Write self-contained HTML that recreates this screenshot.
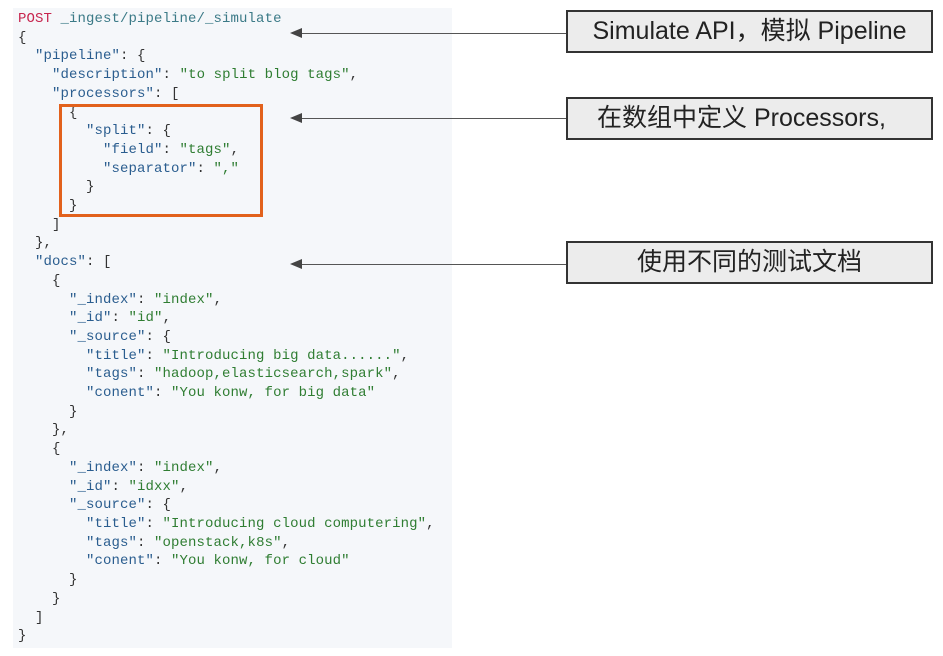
<!DOCTYPE html>
<html><head><meta charset="utf-8"><style>
body{margin:0;width:943px;height:656px;background:#fff;position:relative;overflow:hidden}
#p{position:absolute;left:13px;top:8px;width:439px;height:640px;background:#f5f7fa}
pre{position:absolute;left:18px;top:10px;margin:0;font-family:"Liberation Mono",monospace;font-size:14px;line-height:18.7px;color:#333;letter-spacing:0.1px}
.k{color:#2a5d8f}.s{color:#2f7d32}.r{color:#c7254e}.u{color:#3b7a87}
.b{position:absolute;left:566px;width:367px;height:43px;background:#ececec;border:2px solid #333;box-sizing:border-box;font-family:"Liberation Sans","Noto Sans CJK SC",sans-serif;font-size:25px;color:#222;text-align:center;line-height:39px}
.l{position:absolute;left:298px;width:268px;height:1px;background:#555}
.a{position:absolute;left:290px;width:0;height:0;border-top:5px solid transparent;border-bottom:5px solid transparent;border-right:12px solid #444}
#o{position:absolute;left:59px;top:104px;width:204px;height:113px;border:3px solid #e2611c;box-sizing:border-box}
</style></head><body>
<div id="p"></div>
<pre><span class="r">POST</span> <span class="u">_ingest/pipeline/_simulate</span>
{
  <span class="k">"pipeline"</span>: {
    <span class="k">"description"</span>: <span class="s">"to split blog tags"</span>,
    <span class="k">"processors"</span>: [
      {
        <span class="k">"split"</span>: {
          <span class="k">"field"</span>: <span class="s">"tags"</span>,
          <span class="k">"separator"</span>: <span class="s">","</span>
        }
      }
    ]
  },
  <span class="k">"docs"</span>: [
    {
      <span class="k">"_index"</span>: <span class="s">"index"</span>,
      <span class="k">"_id"</span>: <span class="s">"id"</span>,
      <span class="k">"_source"</span>: {
        <span class="k">"title"</span>: <span class="s">"Introducing big data......"</span>,
        <span class="k">"tags"</span>: <span class="s">"hadoop,elasticsearch,spark"</span>,
        <span class="k">"conent"</span>: <span class="s">"You konw, for big data"</span>
      }
    },
    {
      <span class="k">"_index"</span>: <span class="s">"index"</span>,
      <span class="k">"_id"</span>: <span class="s">"idxx"</span>,
      <span class="k">"_source"</span>: {
        <span class="k">"title"</span>: <span class="s">"Introducing cloud computering"</span>,
        <span class="k">"tags"</span>: <span class="s">"openstack,k8s"</span>,
        <span class="k">"conent"</span>: <span class="s">"You konw, for cloud"</span>
      }
    }
  ]
}</pre>
<div id="o"></div>
<div class="l" style="top:33px"></div><div class="a" style="top:28px"></div>
<div class="l" style="top:118px"></div><div class="a" style="top:113px"></div>
<div class="l" style="top:264px"></div><div class="a" style="top:259px"></div>
<div class="b" style="top:10px">Simulate API，模拟 Pipeline</div>
<div class="b" style="top:97px;text-align:left;padding-left:29px">在数组中定义 Processors,</div>
<div class="b" style="top:241px">使用不同的测试文档</div>
</body></html>
